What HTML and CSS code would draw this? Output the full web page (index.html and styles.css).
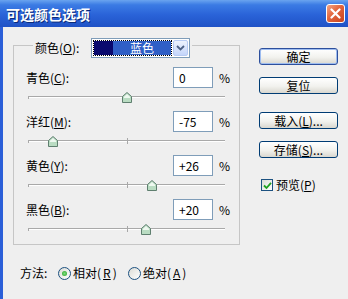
FILE: index.html
```html
<!DOCTYPE html>
<html>
<head>
  <meta charset="utf-8">
  <title>可选颜色选项</title>
  <link rel="stylesheet" href="styles.css">
</head>
<body>
  <div class="window">
    <div class="titlebar">
      <span class="title">可选颜色选项</span>
      <span class="close">
        <svg width="11" height="11" viewBox="0 0 11 11"><path d="M1.5 1.5 L9.5 9.5 M9.5 1.5 L1.5 9.5" stroke="#fff" stroke-width="2.2" stroke-linecap="round"/></svg>
      </span>
    </div>

    <div class="content">
      <div class="main">
        <fieldset class="group">
          <legend class="legend">
            <span class="legend-label">颜色(<u>O</u>):</span>
            <span class="combo">
              <span class="combo-value"><span class="swatch"></span><span class="combo-text">蓝色</span></span>
              <span class="combo-btn">
                <svg width="9" height="6" viewBox="0 0 9 6"><path d="M1 1 L4.5 4.5 L8 1" fill="none" stroke="#4d6185" stroke-width="1.8"/></svg>
              </span>
            </span>
          </legend>

          <div class="row">
            <span class="row-label">青色(<u>C</u>):</span>
            <span class="field">0</span>
            <span class="pct">%</span>
          </div>
          <div class="slider">
            <div class="track"></div>
            <span class="tick tick-start"></span>
            <span class="tick tick-mid"></span>
            <span class="thumb" style="left: 50%"><svg width="10" height="11" viewBox="0 0 10 11"><path d="M5 0.5 L9.5 4.5 L9.5 10.5 L0.5 10.5 L0.5 4.5 Z" fill="#b9dcc2" stroke="#5f7f6f"/><path d="M5 2 L8 4.8 L8 6 L2 6 L2 4.8 Z" fill="#eef8f0"/></svg></span>
          </div>

          <div class="row">
            <span class="row-label">洋红(<u>M</u>):</span>
            <span class="field">-75</span>
            <span class="pct">%</span>
          </div>
          <div class="slider">
            <div class="track"></div>
            <span class="tick tick-start"></span>
            <span class="tick tick-mid"></span>
            <span class="thumb" style="left: 12.5%"><svg width="10" height="11" viewBox="0 0 10 11"><path d="M5 0.5 L9.5 4.5 L9.5 10.5 L0.5 10.5 L0.5 4.5 Z" fill="#b9dcc2" stroke="#5f7f6f"/><path d="M5 2 L8 4.8 L8 6 L2 6 L2 4.8 Z" fill="#eef8f0"/></svg></span>
          </div>

          <div class="row">
            <span class="row-label">黄色(<u>Y</u>):</span>
            <span class="field">+26</span>
            <span class="pct">%</span>
          </div>
          <div class="slider">
            <div class="track"></div>
            <span class="tick tick-start"></span>
            <span class="tick tick-mid"></span>
            <span class="thumb" style="left: 63%"><svg width="10" height="11" viewBox="0 0 10 11"><path d="M5 0.5 L9.5 4.5 L9.5 10.5 L0.5 10.5 L0.5 4.5 Z" fill="#b9dcc2" stroke="#5f7f6f"/><path d="M5 2 L8 4.8 L8 6 L2 6 L2 4.8 Z" fill="#eef8f0"/></svg></span>
          </div>

          <div class="row">
            <span class="row-label">黑色(<u>B</u>):</span>
            <span class="field">+20</span>
            <span class="pct">%</span>
          </div>
          <div class="slider">
            <div class="track"></div>
            <span class="tick tick-start"></span>
            <span class="tick tick-mid"></span>
            <span class="thumb" style="left: 60%"><svg width="10" height="11" viewBox="0 0 10 11"><path d="M5 0.5 L9.5 4.5 L9.5 10.5 L0.5 10.5 L0.5 4.5 Z" fill="#b9dcc2" stroke="#5f7f6f"/><path d="M5 2 L8 4.8 L8 6 L2 6 L2 4.8 Z" fill="#eef8f0"/></svg></span>
          </div>
        </fieldset>

        <div class="buttons">
          <button class="btn btn-default">确定</button>
          <button class="btn btn-reset">复位</button>
          <button class="btn btn-load">载入(<u>L</u>)...</button>
          <button class="btn btn-save">存储(<u>S</u>)...</button>
          <div class="preview">
            <span class="check">
              <svg width="9" height="9" viewBox="0 0 9 9"><path d="M1 4.5 L3.5 7 L8 1.8" fill="none" stroke="#21a121" stroke-width="1.8"/></svg>
            </span>
            <span>预览(<u>P</u>)</span>
          </div>
        </div>
      </div>

      <div class="method">
        <span class="method-label">方法:</span>
        <span class="option"><span class="radio radio-on"></span>相对(<u>R</u>)</span>
        <span class="option"><span class="radio"></span>绝对(<u>A</u>)</span>
      </div>
    </div>
  </div>
</body>
</html>
```

FILE: styles.css
```css
body {
  margin: 0;
  font-family: "Noto Sans CJK SC", sans-serif;
  font-size: 12px;
  color: #000;
  background: #efefef;
}
.window {
  width: 348px;
  height: 299px;
  background: #efefef;
  overflow: hidden;
}
.titlebar {
  box-sizing: border-box;
  height: 27px;
  display: flex;
  align-items: center;
  justify-content: space-between;
  padding: 0 3px 0 6px;
  background: linear-gradient(#6aa4ef 0%, #3b7be4 18%, #2a63d8 55%, #1f52c6 100%);
}
.title {
  color: #fff;
  font-weight: bold;
  font-size: 14px;
  line-height: 16px;
  text-shadow: 1px 1px 0 #0a2a78;
}
.close {
  box-sizing: border-box;
  width: 19px;
  height: 19px;
  border: 1px solid #fff;
  border-radius: 3px;
  background: linear-gradient(135deg, #f3a585, #e2643c 45%, #c9441f);
  display: flex;
  align-items: center;
  justify-content: center;
}

.content {
  box-sizing: border-box;
  height: 272px;
  border-left: 3px solid #2b5fd8;
  padding: 11px 0 0 10px;
}
.main {
  display: flex;
  align-items: flex-start;
}

/* group box */
.group {
  box-sizing: border-box;
  width: 227px;
  min-width: 0;
  margin: 0;
  padding: 15px 4px 1px 12px;
  border: 1px solid #c6c6c6;
}
.legend {
  height: 14px;
  margin-left: 7px;
  padding: 0 2px;
  display: flex;
  align-items: flex-start;
}
.legend-label {
  width: 56px;
  line-height: 20px;
}
.combo {
  box-sizing: border-box;
  width: 99px;
  height: 20px;
  border: 1px solid #7f9db9;
  background: #fff;
  display: flex;
  padding: 1px;
}
.combo-value {
  flex: 1;
  display: flex;
  margin: 1px 2px 1px 1px;
  outline: 1px dotted #000;
}
.swatch {
  width: 19px;
  background: #0a0a6e;
}
.combo-text {
  flex: 1;
  background: #2f5fc6;
  color: #fff;
  text-align: center;
  line-height: 14px;
}
.combo-btn {
  box-sizing: border-box;
  width: 15px;
  border: 1px solid #b7cbf4;
  border-radius: 2px;
  background: linear-gradient(#eef3fd, #c4d5fa);
  display: flex;
  align-items: center;
  justify-content: center;
}

.row {
  display: flex;
  align-items: center;
  height: 21px;
}
.row-label {
  flex: 1;
  line-height: 14px;
}
.field {
  box-sizing: border-box;
  width: 40px;
  height: 21px;
  border: 1px solid #7f9db9;
  background: #fff;
  padding-left: 5px;
  line-height: 19px;
}
.pct {
  width: 16px;
  margin-left: 6px;
  line-height: 14px;
}

.slider {
  position: relative;
  box-sizing: border-box;
  height: 18px;
  padding-top: 8px;
  margin: 0 10px 5px 2px;
}
.track {
  height: 1px;
  background: #a9a9a9;
  border-bottom: 1px solid #fff;
}
.tick {
  position: absolute;
  width: 1px;
  background: #a8a8a8;
}
.tick-start {
  left: 0;
  top: 8px;
  height: 3px;
}
.tick-mid {
  left: 50%;
  top: 6px;
  height: 6px;
}
.thumb {
  position: absolute;
  top: 4px;
  margin-left: -5px;
  width: 10px;
  height: 11px;
}
.thumb svg {
  display: block;
}

/* buttons */
.buttons {
  width: 79px;
  margin: 10px 0 0 19px;
  display: flex;
  flex-direction: column;
}
.btn {
  box-sizing: border-box;
  height: 17px;
  padding: 0;
  border: 1px solid #003c74;
  border-radius: 3px;
  background: linear-gradient(#ffffff, #f2f2ee 55%, #d9d7cf);
  font-family: "Noto Sans CJK SC", sans-serif;
  font-size: 12px;
  line-height: 15px;
  color: #000;
  text-align: center;
}
.btn-default {
  box-shadow: inset 0 0 0 1px #9dbcf0;
  border-color: #2d4f9c;
}
.btn-reset {
  margin-top: 12px;
}
.btn-load {
  margin-top: 18px;
}
.btn-save {
  margin-top: 12px;
}
.preview {
  margin: 20px 0 0 2px;
  display: flex;
  align-items: center;
  gap: 3px;
  line-height: 14px;
}
.check {
  box-sizing: border-box;
  width: 12px;
  height: 12px;
  border: 1px solid #1c5180;
  background: linear-gradient(135deg, #dcdcd6, #fff);
  display: flex;
  align-items: center;
  justify-content: center;
}

/* method row */
.method {
  margin: 20px 0 0 7px;
  height: 16px;
  display: flex;
  align-items: center;
  line-height: 14px;
}
.method-label {
  width: 38px;
}
.option {
  width: 70px;
  display: flex;
  align-items: center;
  gap: 2px;
}
.radio {
  box-sizing: border-box;
  width: 13px;
  height: 13px;
  border: 1px solid #1c5180;
  border-radius: 50%;
  background: linear-gradient(135deg, #dcdcd6, #fff);
  display: flex;
  align-items: center;
  justify-content: center;
}
.radio-on::after {
  content: "";
  width: 5px;
  height: 5px;
  border-radius: 50%;
  background: radial-gradient(#7fdc7f, #21a121);
}
```
